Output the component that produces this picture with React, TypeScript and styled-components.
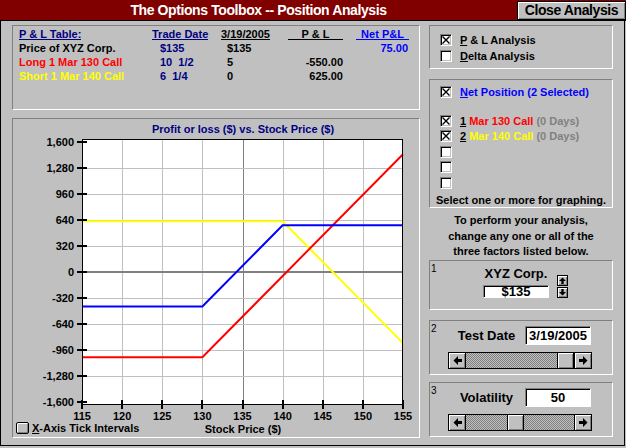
import React from "react";
import styled, { createGlobalStyle } from "styled-components";

const SANS = `"Liberation Sans", Arial, Helvetica, sans-serif`;

const GlobalStyle = createGlobalStyle`
  html, body { margin: 0; padding: 0; background: #c0c0c0; }
  body { width: 626px; height: 448px; overflow: hidden; }
  *, *::before, *::after { box-sizing: border-box; }
`;

const raised = `
  background: #c0c0c0;
  border: 1px solid #000;
  box-shadow: inset 1px 1px 0 #fff, inset -1px -1px 0 #808080;
`;

const Window = styled.div`
  width: 626px;
  height: 448px;
  display: flex;
  flex-direction: column;
  background: #c0c0c0;
  font: bold 11px ${SANS};
  color: #000;
`;

const TitleBar = styled.header`
  height: 21px;
  display: flex;
  background: #800000;
  border-bottom: 1px solid #000;
`;

const Title = styled.h1`
  flex: 1;
  margin: 0;
  display: flex;
  align-items: center;
  justify-content: center;
  color: #fff;
  font: bold 14px ${SANS};
  letter-spacing: -0.4px;
`;

const CloseButton = styled.button`
  ${raised}
  width: 109px;
  height: 19px;
  margin: 1px 0 0 0;
  padding: 0;
  color: #000;
  font: bold 14px ${SANS};
  letter-spacing: -0.4px;
  line-height: 15px;
  white-space: nowrap;
`;

const Body = styled.main`
  flex: 1;
  display: flex;
  gap: 9px;
  padding: 4px 10px 0 11px;
  margin: 0 1px 2px 0;
  border: 1px solid #000;
  border-top: none;
`;

const LeftCol = styled.div`
  width: 408px;
  display: flex;
  flex-direction: column;
  gap: 8px;
`;

const RightCol = styled.div`
  width: 184px;
  display: flex;
  flex-direction: column;
`;

const Panel = styled.section<{ $h: number; $mt?: number }>`
  height: ${(p) => p.$h}px;
  margin-top: ${(p) => p.$mt ?? 0}px;
  border: 1px solid;
  border-color: #808080 #fff #fff #808080;
`;

/* ---------- P & L table ---------- */
const PLTable = styled.div`
  display: grid;
  grid-template-columns: 133px 69px 67px 68px 53px;
  grid-template-rows: 15px;
  grid-auto-rows: 14px;
  padding: 0 0 0 6px;
  line-height: 14px;
  white-space: pre;
`;

const Head = styled.span<{ $c: string; $w?: number }>`
  justify-self: start;
  width: ${(p) => (p.$w ? `${p.$w}px` : "auto")};
  text-align: ${(p) => (p.$w ? "center" : "left")};
  color: ${(p) => p.$c};
  height: 14px;
  line-height: 12px;
  padding-top: 2px;
  border-bottom: 1px solid currentColor;
`;

const Cell = styled.span<{ $c?: string; $w?: number; $indent?: number }>`
  color: ${(p) => p.$c ?? "#000"};
  width: ${(p) => (p.$w ? `${p.$w}px` : "auto")};
  text-align: ${(p) => (p.$w ? "right" : "left")};
  padding-left: ${(p) => p.$indent ?? 0}px;
`;

/* ---------- chart ---------- */
const ChartPanel = styled(Panel)`
  display: flex;
  flex-direction: column;
`;

const ChartTitle = styled.h2`
  margin: 0 0 0 69px;
  width: 322px;
  height: 16px;
  padding-top: 4px;
  line-height: 12px;
  text-align: center;
  color: #000080;
  font: bold 11px ${SANS};
`;

const ChartSvg = styled.svg`
  display: block;
  flex: none;
  text {
    font: bold 11px ${SANS};
    fill: #000;
  }
`;

const ChartFoot = styled.div`
  display: grid;
  grid-template-columns: 69px 322px;
  height: 14px;
`;

const AxisToggle = styled.label`
  grid-column: 1 / -1;
  grid-row: 1;
  display: flex;
  align-items: center;
  gap: 3px;
  padding-left: 3px;
  align-self: start;
  margin-top: -2px;
  height: 13px;
`;

const ToggleBtn = styled.span`
  width: 13px;
  height: 12px;
  border: 1px solid #000;
  border-radius: 2px;
  background: #c0c0c0;
  box-shadow: inset 1px 1px 0 #fff, inset -1px -1px 0 #808080;
`;

const AxisName = styled.span`
  grid-column: 2;
  grid-row: 1;
  justify-self: center;
  align-self: start;
  line-height: 13px;
`;

const Ul = styled.span`
  text-decoration: underline;
`;

/* ---------- right side ---------- */
const AnalysisPanel = styled(Panel)`
  padding: 6px 0 0 10px;
`;

const SelectPanel = styled(Panel)`
  padding: 4px 0 0 10px;
  display: flex;
  flex-direction: column;
`;

const CheckRow = styled.label<{ $h?: number; $mb?: number }>`
  display: flex;
  align-items: center;
  gap: 8px;
  height: ${(p) => p.$h ?? 16}px;
  margin-bottom: ${(p) => p.$mb ?? 0}px;
`;

const Box = styled.span`
  width: 12px;
  height: 12px;
  flex: none;
  display: flex;
  align-items: center;
  justify-content: center;
  background: #fff;
  border: 1px solid;
  border-color: #808080 #fff #fff #808080;
  box-shadow: inset 1px 1px 0 #000, inset -1px -1px 0 #c0c0c0;
`;

const Colored = styled.span<{ $c: string }>`
  color: ${(p) => p.$c};
`;

const Hint = styled.div`
  margin: 2px 0 0 -10px;
  line-height: 14px;
  text-align: center;
`;

const Instructions = styled.p`
  margin: 0;
  height: 52px;
  padding-top: 5px;
  line-height: 15.5px;
  text-align: center;
`;

const Num = styled.span`
  font: normal 10px ${SANS};
  line-height: 10px;
  padding-top: 3px;
  align-self: start;
`;

const PricePanel = styled(Panel)`
  display: grid;
  grid-template-columns: 44px 66px 11px;
  column-gap: 8px;
  padding-left: 1px;
`;

const PriceStack = styled.div`
  display: flex;
  flex-direction: column;
  align-items: center;
  padding-top: 5px;
  gap: 3px;
`;

const CtlLabel = styled.span`
  font: bold 13px ${SANS};
  line-height: 16px;
  white-space: nowrap;
`;

const TextBox = styled.span<{ $h: number }>`
  width: 66px;
  height: ${(p) => p.$h}px;
  display: flex;
  align-items: center;
  justify-content: center;
  background: #fff;
  border: 1px solid;
  border-color: #808080 #fff #fff #808080;
  box-shadow: inset 1px 1px 0 #000;
  font: bold 13px ${SANS};
  line-height: 11px;
`;

const Spinner = styled.div`
  display: flex;
  flex-direction: column;
  gap: 1px;
  padding-top: 14px;
`;

const SpinBtn = styled.span`
  ${raised}
  width: 11px;
  height: 11px;
  display: flex;
  align-items: center;
  justify-content: center;
`;

const FactorPanel = styled(Panel)`
  display: grid;
  grid-template-columns: 17px 144px;
  padding-left: 1px;
`;

const FactorBody = styled.div`
  display: flex;
  flex-direction: column;
  gap: 7px;
  padding-top: 5px;
`;

const FactorRow = styled.div`
  display: grid;
  grid-template-columns: 77px 66px;
  align-items: center;
  height: 19px;
  justify-items: center;
`;

const Scroll = styled.div`
  display: flex;
  height: 17px;
  border: 1px solid #000;
`;

const ScrollBtn = styled.span`
  width: 16px;
  flex: none;
  display: flex;
  align-items: center;
  justify-content: center;
  background: #c0c0c0;
  box-shadow: inset 1px 1px 0 #fff, inset -1px -1px 0 #808080;
`;

const Track = styled.div`
  flex: 1;
  position: relative;
  border-left: 1px solid #000;
  border-right: 1px solid #000;
  background: repeating-conic-gradient(#808080 0 25%, #c0c0c0 0 50%) 0 0 / 2px 2px;
`;

const Thumb = styled.span`
  position: absolute;
  top: 0;
  bottom: 0;
  width: 17px;
  background: #c0c0c0;
  border-left: 1px solid #000;
  border-right: 1px solid #000;
  box-shadow: inset 1px 1px 0 #fff, inset -1px -1px 0 #808080;
`;

/* ---------- icons ---------- */
const Arrow = ({ dir, size = 9 }: { dir: "left" | "right" | "up" | "down"; size?: number }) => {
  const rot = { right: 0, left: 180, up: -90, down: 90 }[dir];
  return (
    <svg width={size} height={size} viewBox="0 0 9 9">
      <polygon
        points="0,3 4,3 4,0 8.5,4.5 4,9 4,6 0,6"
        fill="#000"
        transform={`rotate(${rot} 4.5 4.5)`}
      />
    </svg>
  );
};

const XMark = () => (
  <svg width="8" height="8" viewBox="0 0 8 8">
    <path d="M0.5 0.5L7.5 7.5M7.5 0.5L0.5 7.5" stroke="#000" strokeWidth="1.4" />
  </svg>
);

const Check = ({ on }: { on?: boolean }) => <Box>{on ? <XMark /> : null}</Box>;

const ScrollBar = ({ pos }: { pos: number }) => (
  <Scroll>
    <ScrollBtn>
      <Arrow dir="left" />
    </ScrollBtn>
    <Track>
      <Thumb style={{ left: `calc(${pos * 100}% - ${pos * 17}px)` }} />
    </Track>
    <ScrollBtn>
      <Arrow dir="right" />
    </ScrollBtn>
  </Scroll>
);

/* ---------- chart drawing ---------- */
const X0 = 69;
const X1 = 390;
const Y0 = 4;
const Y1 = 270;
const xs = (s: number) => X0 + ((s - 115) * (X1 - X0)) / 40;
const ys = (v: number) => 137 - v * 0.08125;

const series: { color: string; pts: [number, number][] }[] = [
  { color: "#ffff00", pts: [[115, 625], [140, 625], [155, -875]] },
  { color: "#ff0000", pts: [[115, -1050], [130, -1050], [155, 1450]] },
  { color: "#0000ff", pts: [[115, -425], [130, -425], [140, 575], [155, 575]] },
];

const xTicks = [115, 120, 125, 130, 135, 140, 145, 150, 155];
const yTicks = [1600, 1280, 960, 640, 320, 0, -320, -640, -960, -1280, -1600];
const fmt = (v: number) => v.toLocaleString("en-US");
const px = (n: number) => Math.round(n) + 0.5;

const Chart = () => (
  <ChartSvg width={406} height={288} viewBox="0 0 406 288">
    <rect x={X0} y={Y0} width={X1 - X0} height={Y1 - Y0} fill="#fff" />
    {xTicks.slice(1, -1).map((s) => (
      <line
        key={`gx${s}`}
        x1={px(xs(s))}
        x2={px(xs(s))}
        y1={Y0}
        y2={Y1}
        stroke={s === 135 ? "#808080" : "#c0c0c0"}
        shapeRendering="crispEdges"
      />
    ))}
    {yTicks.slice(1, -1).map((v) =>
      v === 0 ? (
        <line key="g0" x1={X0} x2={X1} y1={ys(0)} y2={ys(0)} stroke="#808080" strokeWidth={2} shapeRendering="crispEdges" />
      ) : (
        <line key={`gy${v}`} x1={X0} x2={X1} y1={px(ys(v))} y2={px(ys(v))} stroke="#c0c0c0" shapeRendering="crispEdges" />
      )
    )}
    {series.map((s) => (
      <polyline
        key={s.color}
        points={s.pts.map(([a, b]) => `${xs(a)},${ys(b)}`).join(" ")}
        fill="none"
        stroke={s.color}
        strokeWidth={2}
      />
    ))}
    <rect x={X0 + 0.5} y={Y0 + 0.5} width={X1 - X0 - 1} height={Y1 - Y0 - 1} fill="none" stroke="#000" shapeRendering="crispEdges" />
    {yTicks.map((v) => (
      <g key={`ty${v}`}>
        <line x1={64} x2={74} y1={px(ys(v)) - 0.5} y2={px(ys(v)) - 0.5} stroke="#000" strokeWidth={2} shapeRendering="crispEdges" />
        <text x={61} y={ys(v) + 4} textAnchor="end">
          {fmt(v)}
        </text>
      </g>
    ))}
    {xTicks.map((s) => (
      <g key={`tx${s}`}>
        <line x1={px(xs(s)) - 0.5} x2={px(xs(s)) - 0.5} y1={265} y2={274} stroke="#000" strokeWidth={2} shapeRendering="crispEdges" />
        <text x={xs(s)} y={285} textAnchor="middle">
          {s}
        </text>
      </g>
    ))}
  </ChartSvg>
);

export default function App() {
  return (
    <>
      <GlobalStyle />
      <Window>
        <TitleBar>
          <Title>The Options Toolbox -- Position Analysis</Title>
          <CloseButton>Close Analysis</CloseButton>
        </TitleBar>
        <Body>
          <LeftCol>
            <Panel $h={85}>
              <PLTable>
                <Head $c="#000080">P &amp; L Table:</Head>
                <Head $c="#000080">Trade Date</Head>
                <Head $c="#000">3/19/2005</Head>
                <Head $c="#000" $w={55}>P &amp; L</Head>
                <Head $c="#0000ff" $w={53}>Net P&amp;L</Head>

                <Cell>Price of XYZ Corp.</Cell>
                <Cell $c="#000080" $indent={8}>$135</Cell>
                <Cell $indent={6}>$135</Cell>
                <Cell $w={55}></Cell>
                <Cell $c="#0000ff" $w={52}>75.00</Cell>

                <Cell $c="#ff0000">Long 1 Mar 130 Call</Cell>
                <Cell $c="#000080" $indent={8}>10  1/2</Cell>
                <Cell $indent={6}>5</Cell>
                <Cell $w={55}>-550.00</Cell>
                <Cell></Cell>

                <Cell $c="#ffff00">Short 1 Mar 140 Call</Cell>
                <Cell $c="#000080" $indent={8}>6  1/4</Cell>
                <Cell $indent={6}>0</Cell>
                <Cell $w={55}>625.00</Cell>
                <Cell></Cell>
              </PLTable>
            </Panel>
            <ChartPanel $h={320}>
              <ChartTitle>Profit or loss ($) vs. Stock Price ($)</ChartTitle>
              <Chart />
              <ChartFoot>
                <AxisToggle>
                  <ToggleBtn />
                  <span>
                    <Ul>X</Ul>-Axis Tick Intervals
                  </span>
                </AxisToggle>
                <AxisName>Stock Price ($)</AxisName>
              </ChartFoot>
            </ChartPanel>
          </LeftCol>

          <RightCol>
            <AnalysisPanel $h={44}>
              <CheckRow>
                <Check on />
                <span>
                  <Ul>P</Ul> &amp; L Analysis
                </span>
              </CheckRow>
              <CheckRow>
                <Check />
                <span>
                  <Ul>D</Ul>elta Analysis
                </span>
              </CheckRow>
            </AnalysisPanel>

            <SelectPanel $h={129} $mt={10}>
              <CheckRow $mb={13}>
                <Check on />
                <Colored $c="#0000ff">
                  <Ul>N</Ul>et Position (2 Selected)
                </Colored>
              </CheckRow>
              <CheckRow $h={15.5}>
                <Check on />
                <span>
                  <Ul>1</Ul> <Colored $c="#ff0000">Mar 130 Call</Colored>{" "}
                  <Colored $c="#808080">(0 Days)</Colored>
                </span>
              </CheckRow>
              <CheckRow $h={15.5}>
                <Check on />
                <span>
                  <Ul>2</Ul> <Colored $c="#ffff00">Mar 140 Call</Colored>{" "}
                  <Colored $c="#808080">(0 Days)</Colored>
                </span>
              </CheckRow>
              <CheckRow $h={15.5}>
                <Check />
              </CheckRow>
              <CheckRow $h={15.5}>
                <Check />
              </CheckRow>
              <CheckRow $h={15.5}>
                <Check />
              </CheckRow>
              <Hint>Select one or more for graphing.</Hint>
            </SelectPanel>

            <Instructions>
              To perform your analysis,
              <br />
              change any one or all of the
              <br />
              three factors listed below.
            </Instructions>

            <PricePanel $h={50}>
              <Num>1</Num>
              <PriceStack>
                <CtlLabel>XYZ Corp.</CtlLabel>
                <TextBox $h={13}>$135</TextBox>
              </PriceStack>
              <Spinner>
                <SpinBtn>
                  <Arrow dir="up" size={7} />
                </SpinBtn>
                <SpinBtn>
                  <Arrow dir="down" size={7} />
                </SpinBtn>
              </Spinner>
            </PricePanel>

            <FactorPanel $h={55} $mt={10}>
              <Num>2</Num>
              <FactorBody>
                <FactorRow>
                  <CtlLabel>Test Date</CtlLabel>
                  <TextBox $h={19}>3/19/2005</TextBox>
                </FactorRow>
                <ScrollBar pos={1} />
              </FactorBody>
            </FactorPanel>

            <FactorPanel $h={55} $mt={7}>
              <Num>3</Num>
              <FactorBody>
                <FactorRow>
                  <CtlLabel>Volatility</CtlLabel>
                  <TextBox $h={19}>50</TextBox>
                </FactorRow>
                <ScrollBar pos={0.45} />
              </FactorBody>
            </FactorPanel>
          </RightCol>
        </Body>
      </Window>
    </>
  );
}
